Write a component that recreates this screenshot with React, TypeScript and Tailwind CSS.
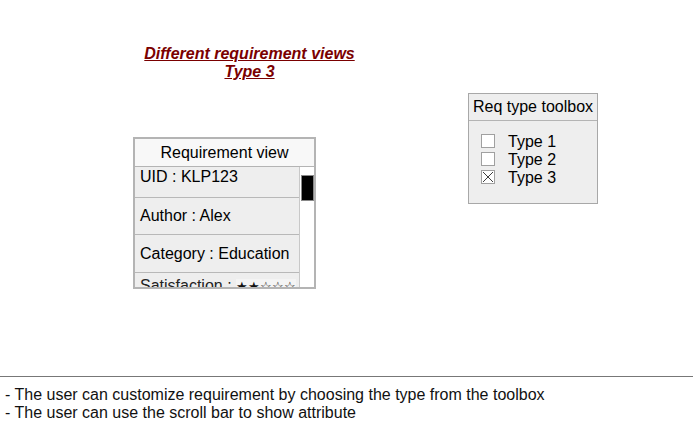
import React from "react";

const font = { fontFamily: '"Liberation Sans", Arial, sans-serif' };

function Checkbox({ checked }: { checked?: boolean }) {
  return (
    <svg width="14" height="14" viewBox="0 0 14 14" className="shrink-0">
      <rect x="0.5" y="0.5" width="13" height="13" fill="#ffffff" stroke="#a0a0a0" />
      {checked && (
        <path d="M2 2 L12 12 M12 2 L2 12" stroke="#404040" strokeWidth="1" fill="none" />
      )}
    </svg>
  );
}

export default function App() {
  return (
    <div className="w-[693px] h-[429px] bg-white overflow-hidden text-black" style={font}>
      {/* diagram canvas */}
      <div className="relative h-[376px]">
        {/* title */}
        <div className="absolute left-[129px] top-[45px] w-[241px] text-center text-[16px] leading-[18px] font-bold italic underline text-[#7a0000]">
          <div>Different requirement views</div>
          <div>Type 3</div>
        </div>

        {/* requirement view */}
        <div className="absolute left-[133px] top-[137px] w-[183px] h-[152px] border-2 border-[#b4b4b4] bg-[#eeeeee] flex flex-col">
          <div className="h-[28px] shrink-0 bg-[#f8f8f8] border-b border-[#b4b4b4] flex items-center justify-center text-[16px]">
            Requirement view
          </div>
          <div className="flex flex-1 min-h-0">
            <div className="flex-1 min-w-0 overflow-hidden flex flex-col text-[16px]">
              <div className="h-[31px] shrink-0 border-b border-[#b8b8b8] pl-[5px] pt-[1px] leading-[18px]">UID : KLP123</div>
              <div className="h-[37px] shrink-0 border-b border-[#b8b8b8] pl-[5px] pt-[9px] leading-[18px]">Author : Alex</div>
              <div className="h-[38px] shrink-0 border-b border-[#b8b8b8] pl-[5px] pt-[10px] leading-[18px]">Category : Education</div>
              <div className="h-[30px] shrink-0 pl-[5px] pt-[4px] leading-[18px] whitespace-nowrap text-[#222]">
                Satisfaction : <span className="bg-[#f4f4f4] text-[#111] text-[13px]">★★☆☆☆</span>
              </div>
            </div>
            <div className="w-[15px] shrink-0 bg-white border-l border-[#c8c8c8] pt-[8px] flex justify-center">
              <div className="w-[13px] h-[26px] bg-black border border-[#888]" />
            </div>
          </div>
        </div>

        {/* toolbox */}
        <div className="absolute left-[468px] top-[93px] w-[130px] h-[111px] border border-[#a8a8a8] bg-[#eeeeee] flex flex-col">
          <div className="h-[27px] shrink-0 border-b border-[#b4b4b4] flex items-center justify-center text-[16px]">
            Req type toolbox
          </div>
          <div className="flex flex-col gap-[4px] pl-[12px] pt-[13px]">
            {["Type 1", "Type 2", "Type 3"].map((t, i) => (
              <div key={t} className="flex items-center gap-[13px] h-[14px] text-[16px] leading-[14px]">
                <Checkbox checked={i === 2} />
                <span className="pt-[2px]">{t}</span>
              </div>
            ))}
          </div>
        </div>
      </div>

      {/* footer notes */}
      <div className="border-t border-[#777] pt-[9px] pl-[5px] text-[16px] leading-[18px] text-[#111]">
        <div>- The user can customize requirement by choosing the type from the toolbox</div>
        <div>- The user can use the scroll bar to show attribute</div>
      </div>
    </div>
  );
}
